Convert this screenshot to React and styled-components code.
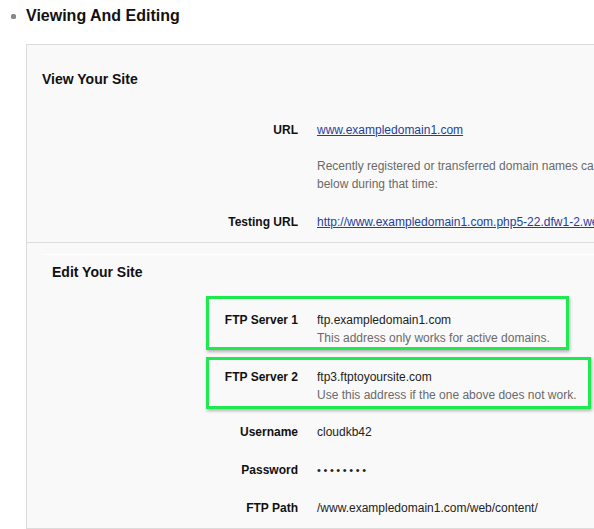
import React from 'react';
import styled, { createGlobalStyle } from 'styled-components';

const GlobalStyle = createGlobalStyle`
    html, body {
        margin: 0;
        padding: 0;
        background: #ffffff;
        overflow: hidden;
    }
    body {
        font-family: "Liberation Sans", Arial, Helvetica, sans-serif;
        color: #111;
        width: 594px;
        height: 529px;
    }
`;

const Page = styled.div`
    width: 594px;
    overflow: hidden;
`;

const Heading = styled.h2`
    display: flex;
    align-items: center;
    margin: 0 0 19px 0;
    padding: 7px 0 0 11px;
    height: 18px;
    font-size: 16px;
    line-height: 18px;
    font-weight: 700;
    color: #111;
`;

const Bullet = styled.span`
    width: 5px;
    height: 5px;
    border-radius: 50%;
    background: #8a8a8a;
    box-shadow: inset 0 0 1px #555;
    margin-right: 10px;
`;

const Panel = styled.div`
    margin-left: 26px;
    width: 567px;
    background: #f9f9f9;
    border-top: 1px solid #dcdcdc;
    border-left: 1px solid #dcdcdc;
    border-bottom: 1px solid #dcdcdc;
    overflow: hidden;
`;

const Section = styled.div`
    padding: 24px 0 11px 0;
    border-bottom: ${p => (p.$divider ? '1px solid #dcdcdc' : 'none')};
`;

const InnerSection = styled.div`
    margin: 11px 0 0 15px;
    border-top: 1px solid #ffffff;
    padding: 7px 0 11px 0;
`;

const Title = styled.h3`
    margin: 0;
    padding-left: ${p => p.$indent}px;
    font-size: 14px;
    line-height: 20px;
    font-weight: 700;
    color: #111;
`;

const Row = styled.div`
    display: grid;
    grid-template-columns: ${p => p.$label}px 1fr;
    column-gap: 19px;
    margin-top: ${p => p.$top}px;
    font-size: 12px;
    line-height: 18px;
`;

const Label = styled.div`
    text-align: right;
    font-weight: 700;
    color: #111;
    white-space: nowrap;
`;

const Value = styled.div`
    color: #222;
    white-space: nowrap;
`;

const Link = styled.a`
    color: #1f3f9f;
    text-decoration: underline;
    white-space: nowrap;
`;

const Note = styled.div`
    color: #6a6a6a;
    white-space: nowrap;
`;

const Dots = styled.span`
    letter-spacing: 2.6px;
    font-size: 11px;
`;

const Highlight = styled.div`
    margin-left: 164px;
    margin-top: ${p => p.$top}px;
    width: ${p => p.$width}px;
    box-sizing: border-box;
    border: 3px solid #1ee94f;
    box-shadow: 1px 2px 3px rgba(0, 0, 0, 0.28);
    padding: ${p => p.$pt}px 0 ${p => p.$pb}px 0;
`;

const BoxRow = styled.div`
    display: grid;
    grid-template-columns: 89px 1fr;
    column-gap: 19px;
    font-size: 12px;
    line-height: 18px;
`;

export default function App() {
    return (
        <Page>
            <GlobalStyle />
            <Heading><Bullet />Viewing And Editing</Heading>
            <Panel>
                <Section $divider>
                    <Title $indent={15}>View Your Site</Title>
                    <Row $label={271} $top={32}>
                        <Label>URL</Label>
                        <Value><Link href="#">www.exampledomain1.com</Link></Value>
                    </Row>
                    <Row $label={271} $top={18}>
                        <div />
                        <Note>
                            Recently registered or transferred domain names can take up to 48 hours to propagate. Use the testing URL
                            <br />
                            below during that time:
                        </Note>
                    </Row>
                    <Row $label={271} $top={20}>
                        <Label>Testing URL</Label>
                        <Value><Link href="#">http://www.exampledomain1.com.php5-22.dfw1-2.websitetestlink.com</Link></Value>
                    </Row>
                </Section>
                <InnerSection>
                    <Title $indent={10}>Edit Your Site</Title>
                    <Highlight $top={14} $width={363} $pt={12} $pb={0}>
                        <BoxRow>
                            <Label>FTP Server 1</Label>
                            <div>
                                <Value>ftp.exampledomain1.com</Value>
                                <Note>This address only works for active domains.</Note>
                            </div>
                        </BoxRow>
                    </Highlight>
                    <Highlight $top={7} $width={385} $pt={8} $pb={2}>
                        <BoxRow>
                            <Label>FTP Server 2</Label>
                            <div>
                                <Value>ftp3.ftptoyoursite.com</Value>
                                <Note>Use this address if the one above does not work.</Note>
                            </div>
                        </BoxRow>
                    </Highlight>
                    <Row $label={256} $top={14}>
                        <Label>Username</Label>
                        <Value>cloudkb42</Value>
                    </Row>
                    <Row $label={256} $top={20}>
                        <Label>Password</Label>
                        <Value><Dots>••••••••</Dots></Value>
                    </Row>
                    <Row $label={256} $top={20}>
                        <Label>FTP Path</Label>
                        <Value>/www.exampledomain1.com/web/content/</Value>
                    </Row>
                </InnerSection>
            </Panel>
        </Page>
    );
}
